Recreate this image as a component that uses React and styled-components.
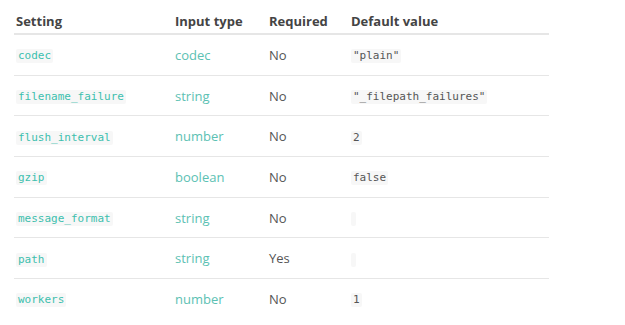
import React from "react";
import styled, { createGlobalStyle } from "styled-components";

const Global = createGlobalStyle`
  body {
    margin: 0;
    background: #fff;
    font-family: "Open Sans", "Noto Sans", sans-serif;
  }
`;

const rows = [
  { name: "codec", type: "codec", req: "No", def: '"plain"' },
  { name: "filename_failure", type: "string", req: "No", def: '"_filepath_failures"' },
  { name: "flush_interval", type: "number", req: "No", def: "2" },
  { name: "gzip", type: "boolean", req: "No", def: "false" },
  { name: "message_format", type: "string", req: "No", def: "" },
  { name: "path", type: "string", req: "Yes", def: "" },
  { name: "workers", type: "number", req: "No", def: "1" },
];

function App() {
  return (
    <>
      <Global />
      <Wrap>
        <Table>
          <thead>
            <tr>
              <Th $w={155}>Setting</Th>
              <Th $w={90}>Input type</Th>
              <Th $w={78}>Required</Th>
              <Th>Default value</Th>
            </tr>
          </thead>
          <tbody>
            {rows.map((r) => (
              <tr key={r.name}>
                <Td><Code $teal>{r.name}</Code></Td>
                <Td><Type>{r.type}</Type></Td>
                <Td>{r.req}</Td>
                <Td><Code>{r.def}</Code></Td>
              </tr>
            ))}
          </tbody>
        </Table>
      </Wrap>
    </>
  );
}

export default App;

const Wrap = styled.div`
  padding: 12px 76px 0 14px;
`;

const Table = styled.table`
  width: 535px;
  border-collapse: collapse;
  font-size: 13px;
  color: #555;
`;

const Th = styled.th`
  text-align: left;
  font-weight: 700;
  color: #444;
  padding: 0 2px;
  height: 21px;
  vertical-align: top;
  width: ${(p) => (p.$w ? p.$w + "px" : "auto")};
  border-bottom: 2px solid #e6e6e6;
`;

const Td = styled.td`
  height: 39.7px;
  padding: 0 2px;
  border-bottom: 1px solid #e6e6e6;
  tr:last-child & {
    border-bottom: none;
  }
`;

const Code = styled.code`
  display: inline-block;
  min-height: 14px;
  min-width: 1px;
  vertical-align: middle;
  font-family: "DejaVu Sans Mono", monospace;
  font-size: 11px;
  line-height: 14px;
  padding: 0 2px;
  background: #f7f7f7;
  border-radius: 2px;
  color: ${(p) => (p.$teal ? "#3dbfae" : "#555")};
`;

const Type = styled.span`
  color: #5cc1b3;
`;
